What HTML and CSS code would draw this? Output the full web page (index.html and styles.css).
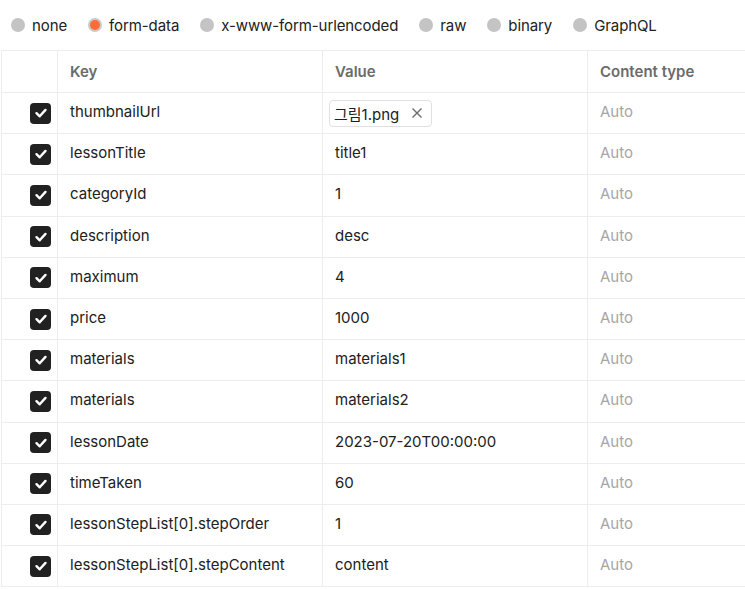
FILE: index.html
```html
<!DOCTYPE html>
<html>
<head>
<meta charset="utf-8">
<link rel="stylesheet" href="styles.css">
</head>
<body>
<div class="page">
  <div class="radios">
    <label class="radio"><span class="dot"></span>none</label>
    <label class="radio"><span class="dot on"></span>form-data</label>
    <label class="radio"><span class="dot"></span>x-www-form-urlencoded</label>
    <label class="radio"><span class="dot"></span>raw</label>
    <label class="radio"><span class="dot"></span>binary</label>
    <label class="radio"><span class="dot"></span>GraphQL</label>
  </div>
  <div class="table">
    <div class="row head">
      <div class="cell chk"></div>
      <div class="cell">Key</div>
      <div class="cell">Value</div>
      <div class="cell">Content type</div>
    </div>
    <div class="row">
      <div class="cell chk"><span class="box"><svg viewBox="0 0 20 20" width="20" height="20"><path d="M5.5 10.2l3.2 3.1 5.8-6.4" fill="none" stroke="#fff" stroke-width="2.4" stroke-linecap="round" stroke-linejoin="round"/></svg></span></div>
      <div class="cell">thumbnailUrl</div>
      <div class="cell file-cell"><span class="chip">그림1.png<svg class="x" viewBox="0 0 12 12" width="12" height="12"><path d="M1.5 1.5l9 9M10.5 1.5l-9 9" stroke="#6b6b6b" stroke-width="1.4"/></svg></span></div>
      <div class="cell auto">Auto</div>
    </div>
    <div class="row">
      <div class="cell chk"><span class="box"><svg viewBox="0 0 20 20" width="20" height="20"><path d="M5.5 10.2l3.2 3.1 5.8-6.4" fill="none" stroke="#fff" stroke-width="2.4" stroke-linecap="round" stroke-linejoin="round"/></svg></span></div>
      <div class="cell">lessonTitle</div>
      <div class="cell">title1</div>
      <div class="cell auto">Auto</div>
    </div>
    <div class="row">
      <div class="cell chk"><span class="box"><svg viewBox="0 0 20 20" width="20" height="20"><path d="M5.5 10.2l3.2 3.1 5.8-6.4" fill="none" stroke="#fff" stroke-width="2.4" stroke-linecap="round" stroke-linejoin="round"/></svg></span></div>
      <div class="cell">categoryId</div>
      <div class="cell">1</div>
      <div class="cell auto">Auto</div>
    </div>
    <div class="row">
      <div class="cell chk"><span class="box"><svg viewBox="0 0 20 20" width="20" height="20"><path d="M5.5 10.2l3.2 3.1 5.8-6.4" fill="none" stroke="#fff" stroke-width="2.4" stroke-linecap="round" stroke-linejoin="round"/></svg></span></div>
      <div class="cell">description</div>
      <div class="cell">desc</div>
      <div class="cell auto">Auto</div>
    </div>
    <div class="row">
      <div class="cell chk"><span class="box"><svg viewBox="0 0 20 20" width="20" height="20"><path d="M5.5 10.2l3.2 3.1 5.8-6.4" fill="none" stroke="#fff" stroke-width="2.4" stroke-linecap="round" stroke-linejoin="round"/></svg></span></div>
      <div class="cell">maximum</div>
      <div class="cell">4</div>
      <div class="cell auto">Auto</div>
    </div>
    <div class="row">
      <div class="cell chk"><span class="box"><svg viewBox="0 0 20 20" width="20" height="20"><path d="M5.5 10.2l3.2 3.1 5.8-6.4" fill="none" stroke="#fff" stroke-width="2.4" stroke-linecap="round" stroke-linejoin="round"/></svg></span></div>
      <div class="cell">price</div>
      <div class="cell">1000</div>
      <div class="cell auto">Auto</div>
    </div>
    <div class="row">
      <div class="cell chk"><span class="box"><svg viewBox="0 0 20 20" width="20" height="20"><path d="M5.5 10.2l3.2 3.1 5.8-6.4" fill="none" stroke="#fff" stroke-width="2.4" stroke-linecap="round" stroke-linejoin="round"/></svg></span></div>
      <div class="cell">materials</div>
      <div class="cell">materials1</div>
      <div class="cell auto">Auto</div>
    </div>
    <div class="row">
      <div class="cell chk"><span class="box"><svg viewBox="0 0 20 20" width="20" height="20"><path d="M5.5 10.2l3.2 3.1 5.8-6.4" fill="none" stroke="#fff" stroke-width="2.4" stroke-linecap="round" stroke-linejoin="round"/></svg></span></div>
      <div class="cell">materials</div>
      <div class="cell">materials2</div>
      <div class="cell auto">Auto</div>
    </div>
    <div class="row">
      <div class="cell chk"><span class="box"><svg viewBox="0 0 20 20" width="20" height="20"><path d="M5.5 10.2l3.2 3.1 5.8-6.4" fill="none" stroke="#fff" stroke-width="2.4" stroke-linecap="round" stroke-linejoin="round"/></svg></span></div>
      <div class="cell">lessonDate</div>
      <div class="cell">2023-07-20T00:00:00</div>
      <div class="cell auto">Auto</div>
    </div>
    <div class="row">
      <div class="cell chk"><span class="box"><svg viewBox="0 0 20 20" width="20" height="20"><path d="M5.5 10.2l3.2 3.1 5.8-6.4" fill="none" stroke="#fff" stroke-width="2.4" stroke-linecap="round" stroke-linejoin="round"/></svg></span></div>
      <div class="cell">timeTaken</div>
      <div class="cell">60</div>
      <div class="cell auto">Auto</div>
    </div>
    <div class="row">
      <div class="cell chk"><span class="box"><svg viewBox="0 0 20 20" width="20" height="20"><path d="M5.5 10.2l3.2 3.1 5.8-6.4" fill="none" stroke="#fff" stroke-width="2.4" stroke-linecap="round" stroke-linejoin="round"/></svg></span></div>
      <div class="cell">lessonStepList[0].stepOrder</div>
      <div class="cell">1</div>
      <div class="cell auto">Auto</div>
    </div>
    <div class="row">
      <div class="cell chk"><span class="box"><svg viewBox="0 0 20 20" width="20" height="20"><path d="M5.5 10.2l3.2 3.1 5.8-6.4" fill="none" stroke="#fff" stroke-width="2.4" stroke-linecap="round" stroke-linejoin="round"/></svg></span></div>
      <div class="cell">lessonStepList[0].stepContent</div>
      <div class="cell">content</div>
      <div class="cell auto">Auto</div>
    </div>
  </div>
</div>
</body>
</html>
```

FILE: styles.css
```css
html, body {
  margin: 0;
  padding: 0;
  background: #ffffff;
  overflow: hidden;
}
body {
  font-family: Inter, "Noto Sans CJK KR", sans-serif;
  font-size: 15px;
  color: #212121;
}
.page {
  width: 745px;
  height: 589px;
  padding-left: 1px;
  box-sizing: border-box;
  overflow: hidden;
}
.radios {
  display: flex;
  align-items: center;
  height: 50px;
  padding-left: 10px;
  gap: 21px;
}
.radio {
  display: flex;
  align-items: center;
  gap: 7px;
  color: #212121;
  letter-spacing: -0.1px;
}
.dot {
  width: 14px;
  height: 14px;
  border-radius: 50%;
  background: #c4c4c4;
  box-sizing: border-box;
}
.dot.on {
  background: #ff6c37;
  border: 2px solid #c9c9c9;
}
.table {
  border-top: 1px solid #ededed;
  border-left: 1px solid #ededed;
  width: 800px;
}
.row {
  display: grid;
  grid-template-columns: 56px 265px 265px 214px;
  height: 41.2px;
  box-sizing: border-box;
  border-bottom: 1px solid #ededed;
}
.row.head {
  height: 42px;
  font-weight: 600;
  color: #6b6b6b;
}
.row.head .cell {
  padding-bottom: 0;
}
.cell {
  display: flex;
  align-items: center;
  padding-left: 12px;
  padding-bottom: 3px;
  border-right: 1px solid #ededed;
  white-space: nowrap;
  overflow: hidden;
}
.cell.chk {
  padding-left: 28px;
  padding-bottom: 0;
}
.box {
  width: 21px;
  height: 21px;
  border-radius: 4px;
  background: #212121;
  display: flex;
  align-items: center;
  justify-content: center;
}
.auto {
  color: #a6a6a6;
}
.file-cell {
  padding-left: 6px;
  padding-bottom: 0;
}
.chip {
  display: inline-flex;
  align-items: center;
  gap: 12px;
  height: 27px;
  padding: 0 8px 0 4px;
  border: 1px solid #e0e0e0;
  border-radius: 4px;
  box-sizing: border-box;
}
.x {
  display: block;
}
```
